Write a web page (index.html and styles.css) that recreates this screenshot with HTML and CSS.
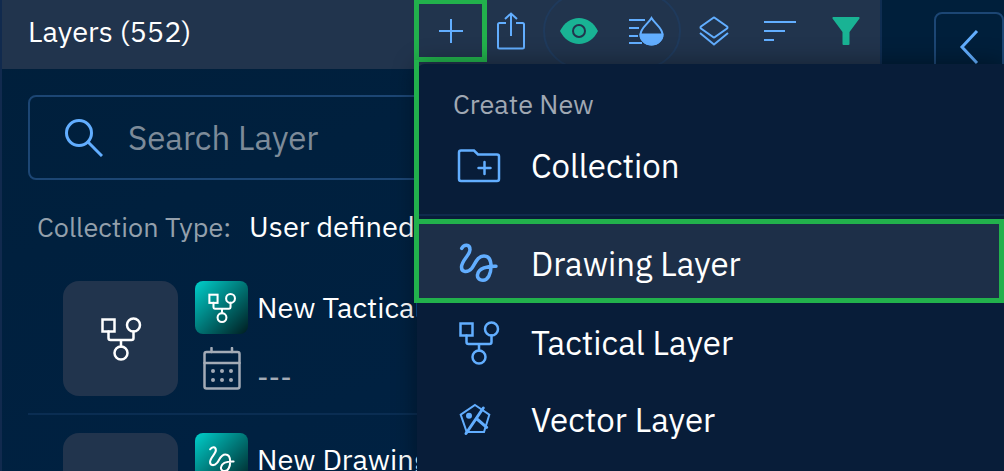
FILE: index.html
```
<!DOCTYPE html>
<html lang="en">
	<head>
		<meta charset="utf-8">
		<title>Layers</title>
		<link rel="stylesheet" href="styles.css">
	</head>
	<body>
		<!-- shared icons -->
		<svg class="defs" width="0" height="0" aria-hidden="true">
			<symbol id="tactical" viewBox="0 0 44 44">
				<rect x="3.5" y="2.5" width="12" height="12" />
				<circle cx="34.5" cy="8" r="6.5" />
				<circle cx="22" cy="36" r="6.5" />
				<path d="M9.5 14.5V21q0 2 2 2h21q2 0 2-2v-6.5M22 23v6.5" />
			</symbol>
			<symbol id="drawing" viewBox="0 0 44 44">
				<path d="M4.7 6.3C7 2.2 13 1.8 13 7.7C13 13 4.5 18.5 4.5 25C4.5 30.5 10.5 31 14.7 26.3C18.5 21.5 20 14 27 14C33 14 34 20 34 24.5C34 32 31 38.3 26 38.3C21.5 38.3 19.8 35 20.7 32C22 26.5 30 24 39 24.3" />
			</symbol>
		</svg>

		<div class="app">

			<section class="panel">
				<header class="panel-header">
					<h1>Layers (552)</h1>
					<div class="toolbar">
						<button class="tool add" aria-label="Add">
							<svg width="24" height="24" viewBox="0 0 24 24"><path d="M12 0v24M0 12h24" /></svg>
						</button>
						<button class="tool share" aria-label="Share">
							<svg width="30" height="38" viewBox="0 0 30 38"><path d="M15 24V1.500M9 7l6-5.500 6 5.500M10 11H3.500q-1.500 0-1.500 1.500V35q0 1.500 1.500 1.500h23q1.500 0 1.500-1.500V12.500q0-1.500-1.500-1.500H20" /></svg>
						</button>
						<div class="tool-group">
							<button class="tool" aria-label="Visibility">
								<svg width="38" height="26" viewBox="0 0 38 26"><path class="fill-green" d="M0 13C4 5 11 0 19 0s15 5 19 13c-4 8-11 13-19 13S4 21 0 13z" /><circle class="pupil" cx="19" cy="13" r="6" /></svg>
							</button>
							<button class="tool" aria-label="Opacity">
								<svg width="36" height="30" viewBox="0 0 36 30"><path d="M1 4h16M1 12h10M1 20h9M1 27h13" /><path d="M23.500 2C20 8 12.500 12 12.500 18.500a11 10 0 0 0 22 0C34.500 12 27 8 23.500 2z" /><path class="fill-blue" d="M12.500 18.500h22a11 10 0 0 1-22 0z" /></svg>
							</button>
						</div>
						<button class="tool" aria-label="Base layers">
							<svg width="30" height="30" viewBox="0 0 30 30"><path d="M14 2q1-1 2 0l12 8.500q1 1 0 2L16 21q-1 1-2 0L2 12.500q-1-1 0-2zM1 17l14 11.500L29 17" /></svg>
						</button>
						<button class="tool" aria-label="Sort">
							<svg width="32" height="20" viewBox="0 0 32 20"><path d="M0 1h32M0 10h21M0 19h10" /></svg>
						</button>
						<button class="tool" aria-label="Filter">
							<svg width="28" height="28" viewBox="0 0 28 28"><path class="fill-green" d="M1 0h26q1 .5 .5 1.500L17.500 15v12q0 1-1 1h-5q-1 0-1-1V15L.5 1.500Q0 .5 1 0z" /></svg>
						</button>
					</div>
				</header>

				<label class="search">
					<svg width="38" height="38" viewBox="0 0 38 38"><circle cx="14" cy="14" r="12.500" /><path d="M23 23l14 14" /></svg>
					<input type="text" placeholder="Search Layer" aria-label="Search Layer">
				</label>

				<div class="type">
					<span class="type-label">Collection Type:</span>
					<span class="type-value">User defined</span>
				</div>

				<ul class="layers">
					<li class="layer">
						<div class="thumb"><svg class="icon"><use href="#tactical" /></svg></div>
						<div class="info">
							<div class="info-row">
								<span class="badge"><svg class="icon"><use href="#tactical" /></svg></span>
								<span class="name">New Tactical</span>
							</div>
							<div class="info-row date-row">
								<svg class="calendar" width="38" height="43" viewBox="0 0 38 43">
									<rect x="1.500" y="5" width="35" height="36.500" rx="2" />
									<path d="M1.500 16h35M8.500 1v4M29 1v4" />
									<g class="dots"><circle cx="10" cy="24" r="2" /><circle cx="19" cy="24" r="2" /><circle cx="28" cy="24" r="2" /><circle cx="10" cy="33" r="2" /><circle cx="19" cy="33" r="2" /><circle cx="28" cy="33" r="2" /></g>
								</svg>
								<span class="date">---</span>
							</div>
						</div>
					</li>
					<li class="layer">
						<div class="thumb"></div>
						<div class="info">
							<div class="info-row">
								<span class="badge"><svg class="icon"><use href="#drawing" /></svg></span>
								<span class="name">New Drawing</span>
							</div>
						</div>
					</li>
				</ul>
			</section>

			<aside class="rail">
				<button class="back" aria-label="Collapse">
					<svg width="20" height="36" viewBox="0 0 20 36"><path d="M18 2L3 18l15 16" /></svg>
				</button>
			</aside>

			<div class="menu">
				<h2>Create New</h2>
				<button class="item">
					<svg class="icon" viewBox="0 0 44 44"><path d="M4 6.500h13l4 4h19q2 0 2 2V35q0 2-2 2H4q-2 0-2-2V8.500q0-2 2-2zM27.500 18v12M21.500 24h12" /></svg>
					Collection
				</button>
				<hr>
				<button class="item active">
					<svg class="icon bold"><use href="#drawing" /></svg>
					Drawing Layer
				</button>
				<button class="item">
					<svg class="icon"><use href="#tactical" /></svg>
					Tactical Layer
				</button>
				<button class="item">
					<svg class="icon vector" viewBox="0 0 44 44"><path d="M18 7l14.300 9.700L27 34H9.700L3.700 16.700z" /><path class="thick" d="M26.300 10L9 35.500M20 21l9.700 8.300" /><circle class="fill-blue" cx="12" cy="17.700" r="2" /></svg>
					Vector Layer
				</button>
			</div> <!-- end .menu -->

		</div> <!-- end .app -->
	</body>
</html>
```

FILE: styles.css
```
* {
	box-sizing: border-box;
}

body {
	margin: 0;
	background: #001f3b;
	color: #fff;
	font-family: "IBM Plex Sans", Roboto, sans-serif;
	font-size: 29px;
	line-height: 34px;
	overflow: hidden;
}

h1, h2 {
	margin: 0;
	font-weight: 400;
}

button {
	padding: 0;
	border: 0;
	background: none;
	color: inherit;
	font: inherit;
	cursor: pointer;
}

svg {
	display: block;
	flex: none;
	fill: none;
	stroke: #62aeff;
	stroke-width: 2;
}

.defs {
	position: absolute;
}

.icon {
	width: 44px;
	height: 44px;
	stroke-width: 2.5;
	stroke-linecap: round;
}

.icon.bold {
	stroke-width: 3.5;
}

.icon.vector {
	stroke-width: 2;
}

.thick {
	stroke-width: 3;
}

.fill-green {
	fill: #19b394;
	stroke: none;
}

.fill-blue {
	fill: #62aeff;
}

.pupil {
	stroke: #21344d;
}

.app {
	position: relative;
	display: flex;
	height: 100vh;
	overflow: hidden;
}

/* left panel */

.panel {
	flex: 1;
	min-width: 0;
	border-left: 2px solid #112a4e;
	border-right: 2px solid #0f2d51;
	background: linear-gradient(160deg, #001f3b, #002244);
}

.panel-header {
	display: flex;
	justify-content: space-between;
	height: 69px;
	padding: 0 1px 0 26px;
	background: #21344d;
}

.panel-header h1 {
	font-size: 29px;
	line-height: 62px;
}

.toolbar {
	display: flex;
	align-items: center;
	height: 62px;
}

.tool {
	display: flex;
	align-items: center;
	justify-content: center;
	width: 66px;
	height: 62px;
}

.tool.add {
	width: 73px;
	border: 5px solid #22b14c;
	border-top-width: 4px;
}

.tool.share {
	width: 48px;
}

.tool-group {
	display: flex;
	align-items: center;
	height: 76px;
	margin-left: 8px;
	border: 2px solid #1f3a5c;
	border-radius: 38px;
}

.tool-group .tool {
	width: 67px;
}

.search {
	display: flex;
	align-items: center;
	gap: 25px;
	height: 85px;
	margin: 26px 26px 0;
	padding: 0 35px;
	border: 2px solid #1c4674;
	border-radius: 8px;
}

.search svg {
	stroke-width: 3;
}

.search input {
	flex: 1;
	min-width: 0;
	height: 48px;
	padding: 0;
	border: 0;
	outline: 0;
	background: none;
	color: #fff;
	font: inherit;
	font-size: 33px;
}

.search input::placeholder {
	color: #7d8b99;
	opacity: 1;
}

.type {
	display: flex;
	align-items: baseline;
	gap: 18px;
	padding: 29px 35px 19px;
}

.type-label {
	color: #94a0ac;
	font-size: 27px;
}

.layers {
	margin: 0 26px;
	padding: 0;
	list-style: none;
}

.layer {
	display: flex;
	gap: 17px;
	padding: 18px 35px 17px;
	border-bottom: 2px solid #0a2d52;
}

.thumb {
	display: flex;
	align-items: center;
	justify-content: center;
	width: 115px;
	height: 115px;
	border-radius: 16px;
	background: #21344d;
}

.thumb .icon,
.badge .icon {
	stroke: #fff;
}

.info {
	display: flex;
	flex-direction: column;
	gap: 13px;
}

.info-row {
	display: flex;
	align-items: center;
	gap: 9px;
}

.badge {
	display: flex;
	align-items: center;
	justify-content: center;
	width: 53px;
	height: 53px;
	border-radius: 8px;
	background: linear-gradient(135deg, #00cfcb, #001c20);
}

.name {
	padding-bottom: 2px;
}

.badge .icon {
	width: 30px;
	height: 30px;
	stroke-width: 3;
}

.date-row {
	align-items: flex-end;
	gap: 16px;
	padding-left: 8px;
}

.calendar {
	stroke: #a3abb6;
	stroke-width: 2.500;
	stroke-linecap: round;
}

.dots {
	fill: #a3abb6;
	stroke: none;
}

.date {
	color: #a3abb6;
	line-height: 28px;
}

/* right rail */

.rail {
	display: flex;
	justify-content: flex-end;
	align-items: flex-start;
	width: 122px;
	padding-top: 12px;
	background: #001f3b;
}

.back {
	display: flex;
	align-items: center;
	justify-content: center;
	width: 70px;
	height: 70px;
	border: 2px solid #1c4674;
	border-radius: 8px;
}

.back svg {
	stroke-width: 3;
}

/* create menu, opens over the panel */

.menu {
	position: absolute;
	top: 64px;
	right: 0;
	bottom: 0;
	width: 587px;
	padding-top: 23px;
	border-top-left-radius: 8px;
	background: #081d39;
	box-shadow: 0 0 24px rgba(0, 0, 0, 0.4);
}

/* line from the add button down to the active item */
.menu::before {
	content: "";
	position: absolute;
	top: -4px;
	left: -3px;
	width: 5px;
	height: 160px;
	background: #22b14c;
}

.menu h2 {
	padding: 0 36px 5px;
	color: #a0a8b3;
	font-size: 27px;
}

.item {
	display: flex;
	align-items: center;
	gap: 30px;
	width: 100%;
	height: 77px;
	padding: 2px 0 0 40px;
	font-size: 33px;
	text-align: left;
}

.menu hr {
	height: 2px;
	margin: 11px 0 3px;
	border: 0;
	background: #0f2a4c;
}

.item.active {
	width: auto;
	min-width: 590px;
	height: 84px;
	margin-left: -3px;
	padding: 6px 0 0 38px;
	border: 5px solid #22b14c;
	background: #1d2f48;
}
```
